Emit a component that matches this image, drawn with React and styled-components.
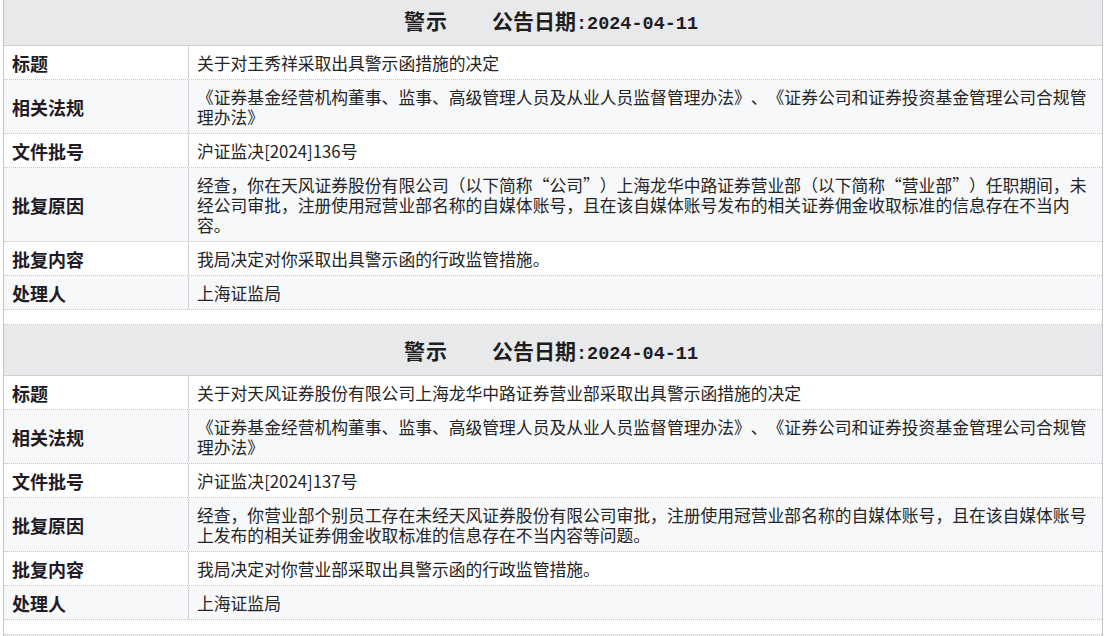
import React from 'react';
import styled, { createGlobalStyle } from 'styled-components';

const GlobalStyle = createGlobalStyle`
  * { box-sizing: border-box; }
  body {
    margin: 0;
    background: #fff;
    font-family: "Noto Sans CJK SC", "Noto Sans", sans-serif;
    color: #222;
    overflow: hidden;
    text-spacing-trim: space-all;
  }
`;

const notices = [
  {
    kind: '警示',
    date: '2024-04-11',
    rows: [
      { label: '标题', lines: ['关于对王秀祥采取出具警示函措施的决定'] },
      {
        label: '相关法规',
        lines: [
          '《证券基金经营机构董事、监事、高级管理人员及从业人员监督管理办法》、《证券公司和证券投资基金管理公司合规管',
          '理办法》'
        ]
      },
      { label: '文件批号', lines: ['沪证监决[2024]136号'] },
      {
        label: '批复原因',
        lines: [
          '经查，你在天风证券股份有限公司（以下简称“公司”）上海龙华中路证券营业部（以下简称“营业部”）任职期间，未',
          '经公司审批，注册使用冠营业部名称的自媒体账号，且在该自媒体账号发布的相关证券佣金收取标准的信息存在不当内',
          '容。'
        ]
      },
      { label: '批复内容', lines: ['我局决定对你采取出具警示函的行政监管措施。'] },
      { label: '处理人', lines: ['上海证监局'] }
    ]
  },
  {
    kind: '警示',
    date: '2024-04-11',
    rows: [
      { label: '标题', lines: ['关于对天风证券股份有限公司上海龙华中路证券营业部采取出具警示函措施的决定'] },
      {
        label: '相关法规',
        lines: [
          '《证券基金经营机构董事、监事、高级管理人员及从业人员监督管理办法》、《证券公司和证券投资基金管理公司合规管',
          '理办法》'
        ]
      },
      { label: '文件批号', lines: ['沪证监决[2024]137号'] },
      {
        label: '批复原因',
        lines: [
          '经查，你营业部个别员工存在未经天风证券股份有限公司审批，注册使用冠营业部名称的自媒体账号，且在该自媒体账号',
          '上发布的相关证券佣金收取标准的信息存在不当内容等问题。'
        ]
      },
      { label: '批复内容', lines: ['我局决定对你营业部采取出具警示函的行政监管措施。'] },
      { label: '处理人', lines: ['上海证监局'] }
    ]
  }
];

const Page = styled.div`
  margin-top: -5px;
  padding-left: 3px;
`;

const Board = styled.div`
  width: 1100px;
  border-left: 1px solid #c4c5c8;
  border-right: 1px solid #c4c5c8;
`;

const Header = styled.div`
  height: 51px;
  display: flex;
  align-items: center;
  justify-content: center;
  gap: 44px;
  padding-right: 4px;
  background: #e8e9eb;
  border-bottom: 1px solid #cfd0d3;
  font-weight: 700;
  font-size: 21px;
  color: #1e1e22;
`;

const Kind = styled.span`
  letter-spacing: 1px;
`;

const DateText = styled.span`
  display: flex;
  align-items: baseline;
`;

const Digits = styled.span`
  font-family: "Liberation Mono", "DejaVu Sans Mono", monospace;
  font-weight: 700;
  font-size: 18.5px;
`;

const Row = styled.div`
  display: grid;
  grid-template-columns: 185px 1fr;
  background: ${p => (p.$shade ? '#f7f8fa' : '#fff')};
  border-bottom: 1px dotted #c6c7ca;
`;

const Label = styled.div`
  display: flex;
  align-items: center;
  padding: 7px 8px 6px;
  border-right: 1px solid #d0d1d4;
  font-weight: 700;
  font-size: 18px;
  line-height: 20px;
  color: #221a24;
`;

const Value = styled.div`
  padding: 7px 8px 6px;
  font-size: 16.8px;
  line-height: 20px;
  color: #242424;
`;

const Line = styled.span`
  display: block;
  white-space: nowrap;
`;

const Spacer = styled.div`
  height: 15px;
  background: #fff;
  border-bottom: 1px dotted #c6c7ca;
`;

function Notice({ notice }) {
  return (
    <section>
      <Header>
        <Kind>{notice.kind}</Kind>
        <DateText>
          公告日期<Digits>:{notice.date}</Digits>
        </DateText>
      </Header>
      {notice.rows.map((row, i) => (
        <Row key={row.label} $shade={i % 2 === 1}>
          <Label>{row.label}</Label>
          <Value>
            {row.lines.map((line, j) => (
              <Line key={j}>{line}</Line>
            ))}
          </Value>
        </Row>
      ))}
      <Spacer />
    </section>
  );
}

export default function App() {
  return (
    <Page>
      <GlobalStyle />
      <Board>
        {notices.map((n, i) => (
          <Notice key={i} notice={n} />
        ))}
        <Header />
      </Board>
    </Page>
  );
}
